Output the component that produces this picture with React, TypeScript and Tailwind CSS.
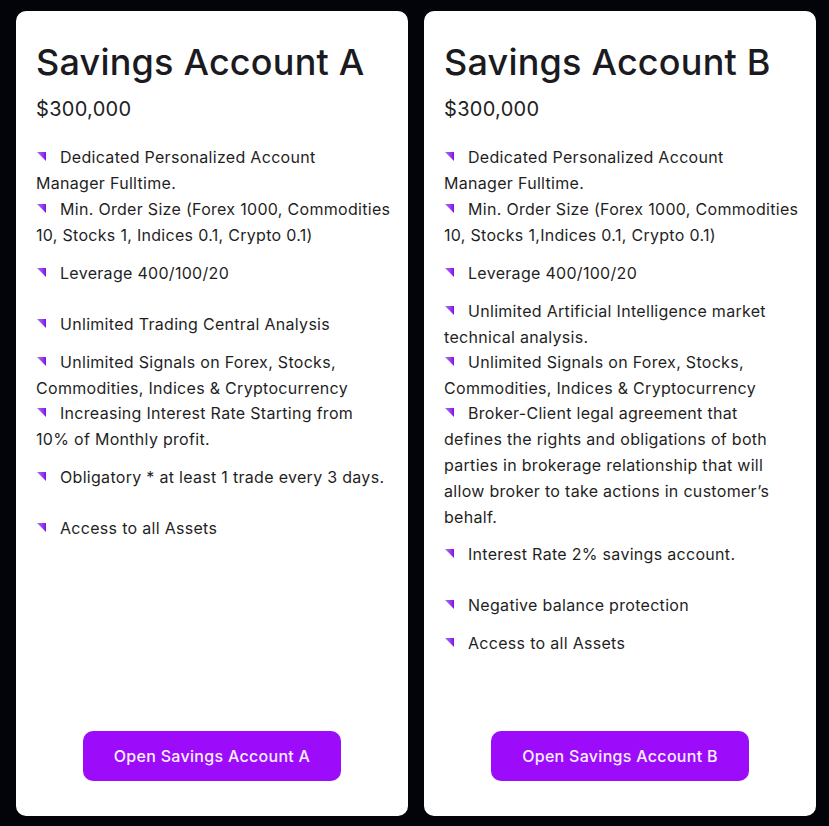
import React from "react"

type Item = { lines: string[]; mt: number }

const accountA: Item[] = [
  { lines: ["Dedicated Personalized Account", "Manager Fulltime."], mt: 0 },
  { lines: ["Min. Order Size (Forex 1000, Commodities", "10, Stocks 1, Indices 0.1, Crypto 0.1)"], mt: 0 },
  { lines: ["Leverage 400/100/20"], mt: 12 },
  { lines: ["Unlimited Trading Central Analysis"], mt: 25 },
  { lines: ["Unlimited Signals on Forex, Stocks,", "Commodities, Indices & Cryptocurrency"], mt: 12 },
  { lines: ["Increasing Interest Rate Starting from", "10% of Monthly profit."], mt: -1 },
  { lines: ["Obligatory * at least 1 trade every 3 days."], mt: 12 },
  { lines: ["Access to all Assets"], mt: 25 },
]

const accountB: Item[] = [
  { lines: ["Dedicated Personalized Account", "Manager Fulltime."], mt: 0 },
  { lines: ["Min. Order Size (Forex 1000, Commodities", "10, Stocks 1,Indices 0.1, Crypto 0.1)"], mt: 0 },
  { lines: ["Leverage 400/100/20"], mt: 12 },
  { lines: ["Unlimited Artificial Intelligence market", "technical analysis."], mt: 12 },
  { lines: ["Unlimited Signals on Forex, Stocks,", "Commodities, Indices & Cryptocurrency"], mt: -1 },
  {
    lines: [
      "Broker-Client legal agreement that",
      "defines the rights and obligations of both",
      "parties in brokerage relationship that will",
      "allow broker to take actions in customer’s",
      "behalf.",
    ],
    mt: -1,
  },
  { lines: ["Interest Rate 2% savings account."], mt: 11 },
  { lines: ["Negative balance protection"], mt: 25 },
  { lines: ["Access to all Assets"], mt: 12 },
]

function Bullet() {
  return (
    <span className="inline-block w-[9px] h-[9px] mr-[14px] ml-[1px] align-[2px] bg-gradient-to-r from-[#a86cf6] to-[#8500e6] [clip-path:polygon(0_0,100%_0,100%_100%)]" />
  )
}

function AccountCard({ title, items, cta }: { title: string; items: Item[]; cta: string }) {
  return (
    <div className="w-[392px] h-[805px] bg-white rounded-[10px] pt-[30px] px-[20px] pb-[35px] flex flex-col">
      <h2 className="text-[36px] leading-[43px] font-medium text-[#1b1b1f] tracking-[0.2px]">{title}</h2>
      <p className="mt-[13px] text-[20px] leading-[24px] text-[#222] tracking-[0.3px]">$300,000</p>
      <ul className="mt-[23px] text-[16px] leading-[26px] text-[#1f1f1f] tracking-[0.3px] whitespace-nowrap">
        {items.map((item, i) => (
          <li key={i} style={{ marginTop: item.mt }}>
            <Bullet />
            {item.lines.map((line, j) => (
              <React.Fragment key={j}>
                {j > 0 && <br />}
                {line}
              </React.Fragment>
            ))}
          </li>
        ))}
      </ul>
      <div className="mt-auto flex justify-center">
        <button className="w-[258px] h-[50px] rounded-[10px] bg-[#9c0cfb] text-[#fbeeff] text-[16px] font-medium tracking-[0.3px]">
          {cta}
        </button>
      </div>
    </div>
  )
}

export default function App() {
  return (
    <div className="w-[829px] h-[826px] bg-[#03030a] pt-[11px] pl-[16px] flex gap-[16px] font-['Inter',sans-serif]">
      <AccountCard title="Savings Account A" items={accountA} cta="Open Savings Account A" />
      <AccountCard title="Savings Account B" items={accountB} cta="Open Savings Account B" />
    </div>
  )
}
